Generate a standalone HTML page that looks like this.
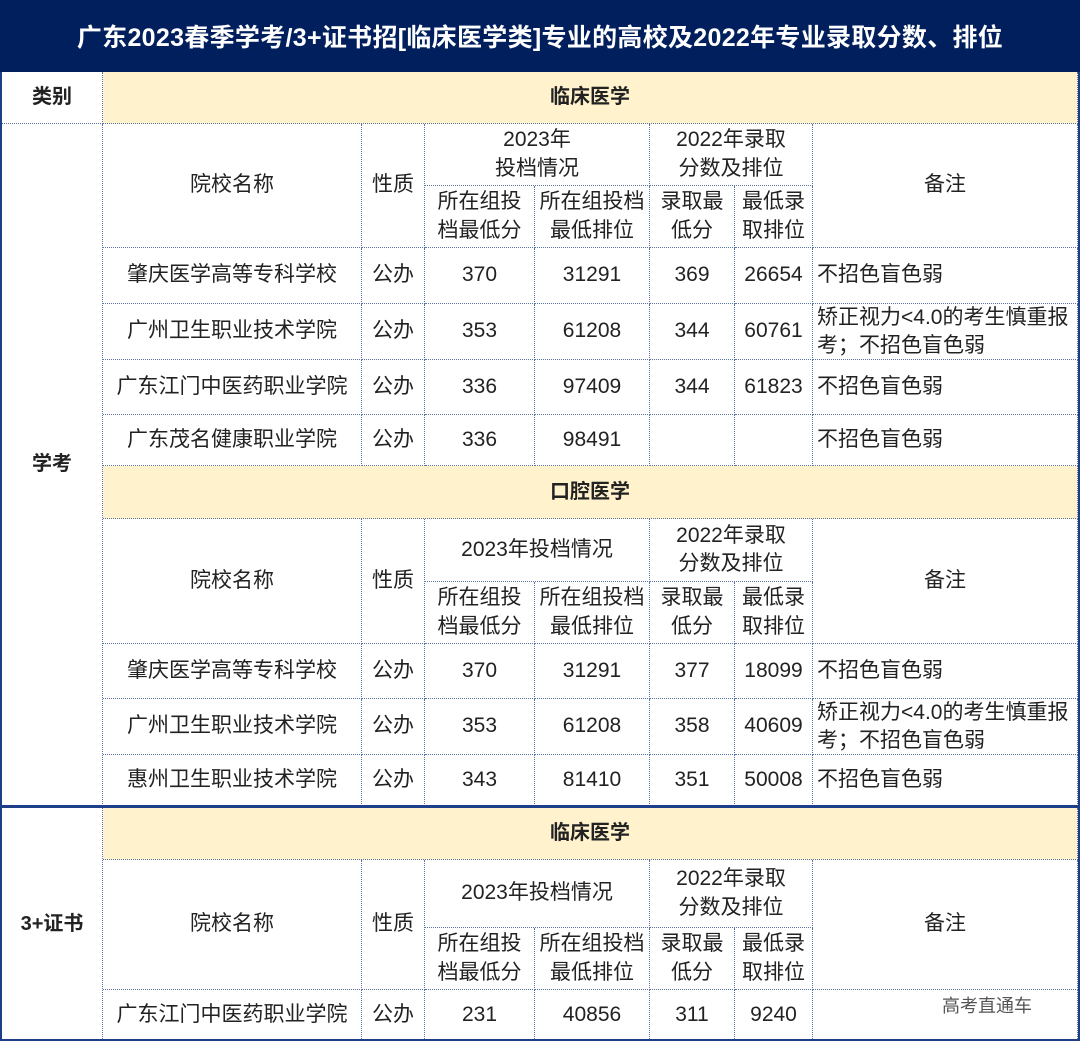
<!DOCTYPE html>
<html><head><meta charset="utf-8"><style>
body{margin:0;width:1080px;height:1041px;overflow:hidden;background:#fff;font-family:"Liberation Sans","Noto Sans CJK SC",sans-serif;color:#222;position:relative}
.h{position:absolute;left:0;top:0;width:1080px;height:72px;background:#001f5c;color:#fff;font-weight:bold;font-size:25px;display:flex;align-items:center;justify-content:center;letter-spacing:0.3px}
.c{position:absolute;display:flex;align-items:center;justify-content:center;text-align:center;border-right:1px dotted #5a74a8;border-bottom:1px dotted #5a74a8;box-sizing:border-box;font-size:21px;line-height:1.35}
.y{background:#fff2cc;font-weight:bold;font-size:20px}
.b{font-weight:bold;font-size:20px}
.l{justify-content:flex-start;text-align:left;padding-left:4px}
.frame{position:absolute;left:0;top:72px;width:1080px;height:969px;border:2px solid #1d3f8a;border-top:none;box-sizing:border-box;pointer-events:none}
.thick{position:absolute;left:0;top:805px;width:1080px;height:3px;background:#1d3f8a}
.ft{position:absolute;left:942px;top:992px;font-size:18px;color:#555}
</style></head><body>
<div class="h">广东2023春季学考/3+证书招[临床医学类]专业的高校及2022年专业录取分数、排位</div>

<div class="c b" style="left:2px;top:72px;width:101px;height:52px">类别</div>
<div class="c y" style="left:103px;top:72px;width:975px;height:52px">临床医学</div>
<div class="c b" style="left:2px;top:124px;width:101px;height:682px">学考</div>

<div class="c" style="left:103px;top:124px;width:259px;height:124px">院校名称</div>
<div class="c" style="left:362px;top:124px;width:63px;height:124px">性质</div>
<div class="c" style="left:425px;top:124px;width:225px;height:62px">2023年<br>投档情况</div>
<div class="c" style="left:650px;top:124px;width:163px;height:62px">2022年录取<br>分数及排位</div>
<div class="c" style="left:813px;top:124px;width:265px;height:124px">备注</div>
<div class="c" style="left:425px;top:186px;width:110px;height:62px">所在组投<br>档最低分</div>
<div class="c" style="left:535px;top:186px;width:115px;height:62px">所在组投档<br>最低排位</div>
<div class="c" style="left:650px;top:186px;width:85px;height:62px">录取最<br>低分</div>
<div class="c" style="left:735px;top:186px;width:78px;height:62px">最低录<br>取排位</div>

<div class="c" style="left:103px;top:248px;width:259px;height:56px">肇庆医学高等专科学校</div>
<div class="c" style="left:362px;top:248px;width:63px;height:56px">公办</div>
<div class="c" style="left:425px;top:248px;width:110px;height:56px">370</div>
<div class="c" style="left:535px;top:248px;width:115px;height:56px">31291</div>
<div class="c" style="left:650px;top:248px;width:85px;height:56px">369</div>
<div class="c" style="left:735px;top:248px;width:78px;height:56px">26654</div>
<div class="c l" style="left:813px;top:248px;width:265px;height:56px">不招色盲色弱</div>

<div class="c" style="left:103px;top:304px;width:259px;height:56px">广州卫生职业技术学院</div>
<div class="c" style="left:362px;top:304px;width:63px;height:56px">公办</div>
<div class="c" style="left:425px;top:304px;width:110px;height:56px">353</div>
<div class="c" style="left:535px;top:304px;width:115px;height:56px">61208</div>
<div class="c" style="left:650px;top:304px;width:85px;height:56px">344</div>
<div class="c" style="left:735px;top:304px;width:78px;height:56px">60761</div>
<div class="c l" style="left:813px;top:304px;width:265px;height:56px;line-height:1.3;white-space:nowrap">矫正视力&lt;4.0的考生慎重报<br>考；不招色盲色弱</div>

<div class="c" style="left:103px;top:360px;width:259px;height:55px">广东江门中医药职业学院</div>
<div class="c" style="left:362px;top:360px;width:63px;height:55px">公办</div>
<div class="c" style="left:425px;top:360px;width:110px;height:55px">336</div>
<div class="c" style="left:535px;top:360px;width:115px;height:55px">97409</div>
<div class="c" style="left:650px;top:360px;width:85px;height:55px">344</div>
<div class="c" style="left:735px;top:360px;width:78px;height:55px">61823</div>
<div class="c l" style="left:813px;top:360px;width:265px;height:55px">不招色盲色弱</div>

<div class="c" style="left:103px;top:415px;width:259px;height:51px">广东茂名健康职业学院</div>
<div class="c" style="left:362px;top:415px;width:63px;height:51px">公办</div>
<div class="c" style="left:425px;top:415px;width:110px;height:51px">336</div>
<div class="c" style="left:535px;top:415px;width:115px;height:51px">98491</div>
<div class="c" style="left:650px;top:415px;width:85px;height:51px"></div>
<div class="c" style="left:735px;top:415px;width:78px;height:51px"></div>
<div class="c l" style="left:813px;top:415px;width:265px;height:51px">不招色盲色弱</div>

<div class="c y" style="left:103px;top:466px;width:975px;height:53px">口腔医学</div>
<div class="c" style="left:103px;top:519px;width:259px;height:125px">院校名称</div>
<div class="c" style="left:362px;top:519px;width:63px;height:125px">性质</div>
<div class="c" style="left:425px;top:519px;width:225px;height:63px">2023年投档情况</div>
<div class="c" style="left:650px;top:519px;width:163px;height:63px">2022年录取<br>分数及排位</div>
<div class="c" style="left:813px;top:519px;width:265px;height:125px">备注</div>
<div class="c" style="left:425px;top:582px;width:110px;height:62px">所在组投<br>档最低分</div>
<div class="c" style="left:535px;top:582px;width:115px;height:62px">所在组投档<br>最低排位</div>
<div class="c" style="left:650px;top:582px;width:85px;height:62px">录取最<br>低分</div>
<div class="c" style="left:735px;top:582px;width:78px;height:62px">最低录<br>取排位</div>

<div class="c" style="left:103px;top:644px;width:259px;height:55px">肇庆医学高等专科学校</div>
<div class="c" style="left:362px;top:644px;width:63px;height:55px">公办</div>
<div class="c" style="left:425px;top:644px;width:110px;height:55px">370</div>
<div class="c" style="left:535px;top:644px;width:115px;height:55px">31291</div>
<div class="c" style="left:650px;top:644px;width:85px;height:55px">377</div>
<div class="c" style="left:735px;top:644px;width:78px;height:55px">18099</div>
<div class="c l" style="left:813px;top:644px;width:265px;height:55px">不招色盲色弱</div>

<div class="c" style="left:103px;top:699px;width:259px;height:56px">广州卫生职业技术学院</div>
<div class="c" style="left:362px;top:699px;width:63px;height:56px">公办</div>
<div class="c" style="left:425px;top:699px;width:110px;height:56px">353</div>
<div class="c" style="left:535px;top:699px;width:115px;height:56px">61208</div>
<div class="c" style="left:650px;top:699px;width:85px;height:56px">358</div>
<div class="c" style="left:735px;top:699px;width:78px;height:56px">40609</div>
<div class="c l" style="left:813px;top:699px;width:265px;height:56px;line-height:1.3;white-space:nowrap">矫正视力&lt;4.0的考生慎重报<br>考；不招色盲色弱</div>

<div class="c" style="left:103px;top:755px;width:259px;height:51px">惠州卫生职业技术学院</div>
<div class="c" style="left:362px;top:755px;width:63px;height:51px">公办</div>
<div class="c" style="left:425px;top:755px;width:110px;height:51px">343</div>
<div class="c" style="left:535px;top:755px;width:115px;height:51px">81410</div>
<div class="c" style="left:650px;top:755px;width:85px;height:51px">351</div>
<div class="c" style="left:735px;top:755px;width:78px;height:51px">50008</div>
<div class="c l" style="left:813px;top:755px;width:265px;height:51px">不招色盲色弱</div>

<div class="c b" style="left:2px;top:808px;width:101px;height:233px">3+证书</div>
<div class="c y" style="left:103px;top:808px;width:975px;height:52px">临床医学</div>
<div class="c" style="left:103px;top:860px;width:259px;height:130px">院校名称</div>
<div class="c" style="left:362px;top:860px;width:63px;height:130px">性质</div>
<div class="c" style="left:425px;top:860px;width:225px;height:68px">2023年投档情况</div>
<div class="c" style="left:650px;top:860px;width:163px;height:68px">2022年录取<br>分数及排位</div>
<div class="c" style="left:813px;top:860px;width:265px;height:130px">备注</div>
<div class="c" style="left:425px;top:928px;width:110px;height:62px">所在组投<br>档最低分</div>
<div class="c" style="left:535px;top:928px;width:115px;height:62px">所在组投档<br>最低排位</div>
<div class="c" style="left:650px;top:928px;width:85px;height:62px">录取最<br>低分</div>
<div class="c" style="left:735px;top:928px;width:78px;height:62px">最低录<br>取排位</div>

<div class="c" style="left:103px;top:990px;width:259px;height:51px">广东江门中医药职业学院</div>
<div class="c" style="left:362px;top:990px;width:63px;height:51px">公办</div>
<div class="c" style="left:425px;top:990px;width:110px;height:51px">231</div>
<div class="c" style="left:535px;top:990px;width:115px;height:51px">40856</div>
<div class="c" style="left:650px;top:990px;width:85px;height:51px">311</div>
<div class="c" style="left:735px;top:990px;width:78px;height:51px">9240</div>
<div class="c" style="left:813px;top:990px;width:265px;height:51px"></div>
<div class="ft">高考直通车</div>

<div class="thick"></div>
<div class="frame"></div>
</body></html>
